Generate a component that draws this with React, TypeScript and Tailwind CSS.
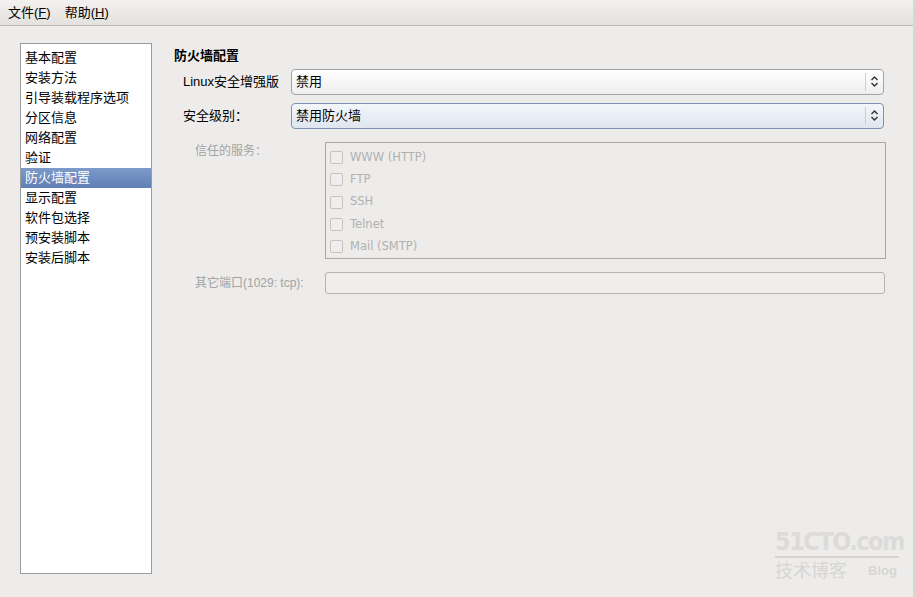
import React from "react";

const font = { fontFamily: '"Liberation Sans", "Noto Sans CJK SC", sans-serif' };

function UpDown() {
  return (
    <svg width="9" height="13" viewBox="0 0 9 13" fill="none" stroke="#333" strokeWidth="1.4">
      <path d="M1.5 5 L4.5 2 L7.5 5" />
      <path d="M1.5 8 L4.5 11 L7.5 8" />
    </svg>
  );
}

function Select({ value, focused }: { value: string; focused?: boolean }) {
  return (
    <div
      className={
        "flex h-[26px] flex-1 items-center rounded-[4px] border " +
        (focused
          ? "border-[#7d93b6] bg-gradient-to-b from-[#f3f7fc] to-[#dfe6ef]"
          : "border-[#a3a3a3] bg-gradient-to-b from-[#ffffff] to-[#eeeeee]")
      }
    >
      <span className="flex-1 pl-[4px] text-[13px] text-black">{value}</span>
      <div className="flex h-[18px] w-[18px] items-center justify-center border-l border-[#cfcfcf]">
        <UpDown />
      </div>
    </div>
  );
}

const items = [
  "基本配置",
  "安装方法",
  "引导装载程序选项",
  "分区信息",
  "网络配置",
  "验证",
  "防火墙配置",
  "显示配置",
  "软件包选择",
  "预安装脚本",
  "安装后脚本",
];

const services = ["WWW (HTTP)", "FTP", "SSH", "Telnet", "Mail (SMTP)"];

export default function App() {
  return (
    <div className="flex h-[597px] w-[915px] flex-col overflow-hidden bg-[#edecea] border-r-[2px] border-[#d8d7d4]" style={font}>
      <div className="flex h-[26px] items-center gap-[14px] border-b border-[#b9b7b3] bg-gradient-to-b from-[#f2f1ef] to-[#e3e2df] pl-[8px] text-[13px] text-black">
        <span>文件(<span className="underline">F</span>)</span>
        <span>帮助(<span className="underline">H</span>)</span>
      </div>
      <div className="flex flex-1 pl-[20px] pt-[17px] pb-[23px]">
        <div className="w-[132px] border border-[#9c9c9c] bg-white pt-[4px] text-[13px]">
          {items.map((it) => (
            <div
              key={it}
              className={
                "flex h-[20px] items-center pl-[4px] " +
                (it === "防火墙配置"
                  ? "bg-gradient-to-b from-[#7d9acb] to-[#5f7fb4] text-white"
                  : "text-black")
              }
            >
              {it}
            </div>
          ))}
        </div>
        <div className="relative flex flex-1 flex-col pl-[22px] pr-[29px] pt-[3px]">
          <div className="text-[13px] font-bold text-black">防火墙配置</div>
          <div className="mt-[3px] flex items-center pl-[9px]">
            <span className="w-[108px] text-[13px] text-black">Linux安全增强版</span>
            <Select value="禁用" />
          </div>
          <div className="mt-[8px] flex items-center pl-[9px]">
            <span className="w-[108px] text-[13px] text-black">安全级别：</span>
            <Select value="禁用防火墙" focused />
          </div>
          <div className="mt-[13px] flex pl-[21px]">
            <span className="w-[130px] text-[12px] text-[#a3a3a3]">信任的服务：</span>
            <div className="mr-[-2px] flex h-[117px] flex-1 flex-col border border-[#a9a9a9] pl-[4px] pt-[4px]">
              {services.map((s) => (
                <div key={s} className="flex h-[23px] items-center gap-[7px]">
                  <div className="h-[13px] w-[13px] rounded-[2px] border border-[#c4c4c4] bg-[#efeeec]" />
                  <span className="text-[#b1b1b1]" style={{ fontFamily: '"DejaVu Sans", sans-serif', fontSize: 11.5 }}>{s}</span>
                </div>
              ))}
            </div>
          </div>
          <div className="mt-[13px] flex items-center pl-[21px]">
            <span className="w-[130px] text-[12px] text-[#a3a3a3]">其它端口(1029: tcp):</span>
            <div className="mr-[-1px] h-[22px] flex-1 rounded-[3px] border border-[#b5b5b5] bg-[#efeeec]" />
          </div>
          <div className="flex-1" />
          <div className="mr-[-15px] mb-[-6px] flex justify-end">
            <div className="flex w-[124px] flex-col items-stretch">
              <div className="whitespace-nowrap text-[25px] font-bold leading-[26px] tracking-[-1.5px] text-[#dcdbd9]" style={{ fontFamily: '"DejaVu Sans Condensed", "Liberation Sans Narrow", sans-serif' }}>51CTO.com</div>
              <div className="mt-[1px] h-[2px] bg-[#d6d5d3]" />
              <div className="flex items-end justify-between text-[#d7d6d4]">
                <span className="text-[18px] leading-[22px]" style={{ fontFamily: '"Noto Sans CJK SC", sans-serif' }}>技术博客</span>
                <span className="pr-[2px] text-[13px] font-bold leading-[18px]">Blog</span>
              </div>
            </div>
          </div>
        </div>
      </div>
    </div>
  );
}
